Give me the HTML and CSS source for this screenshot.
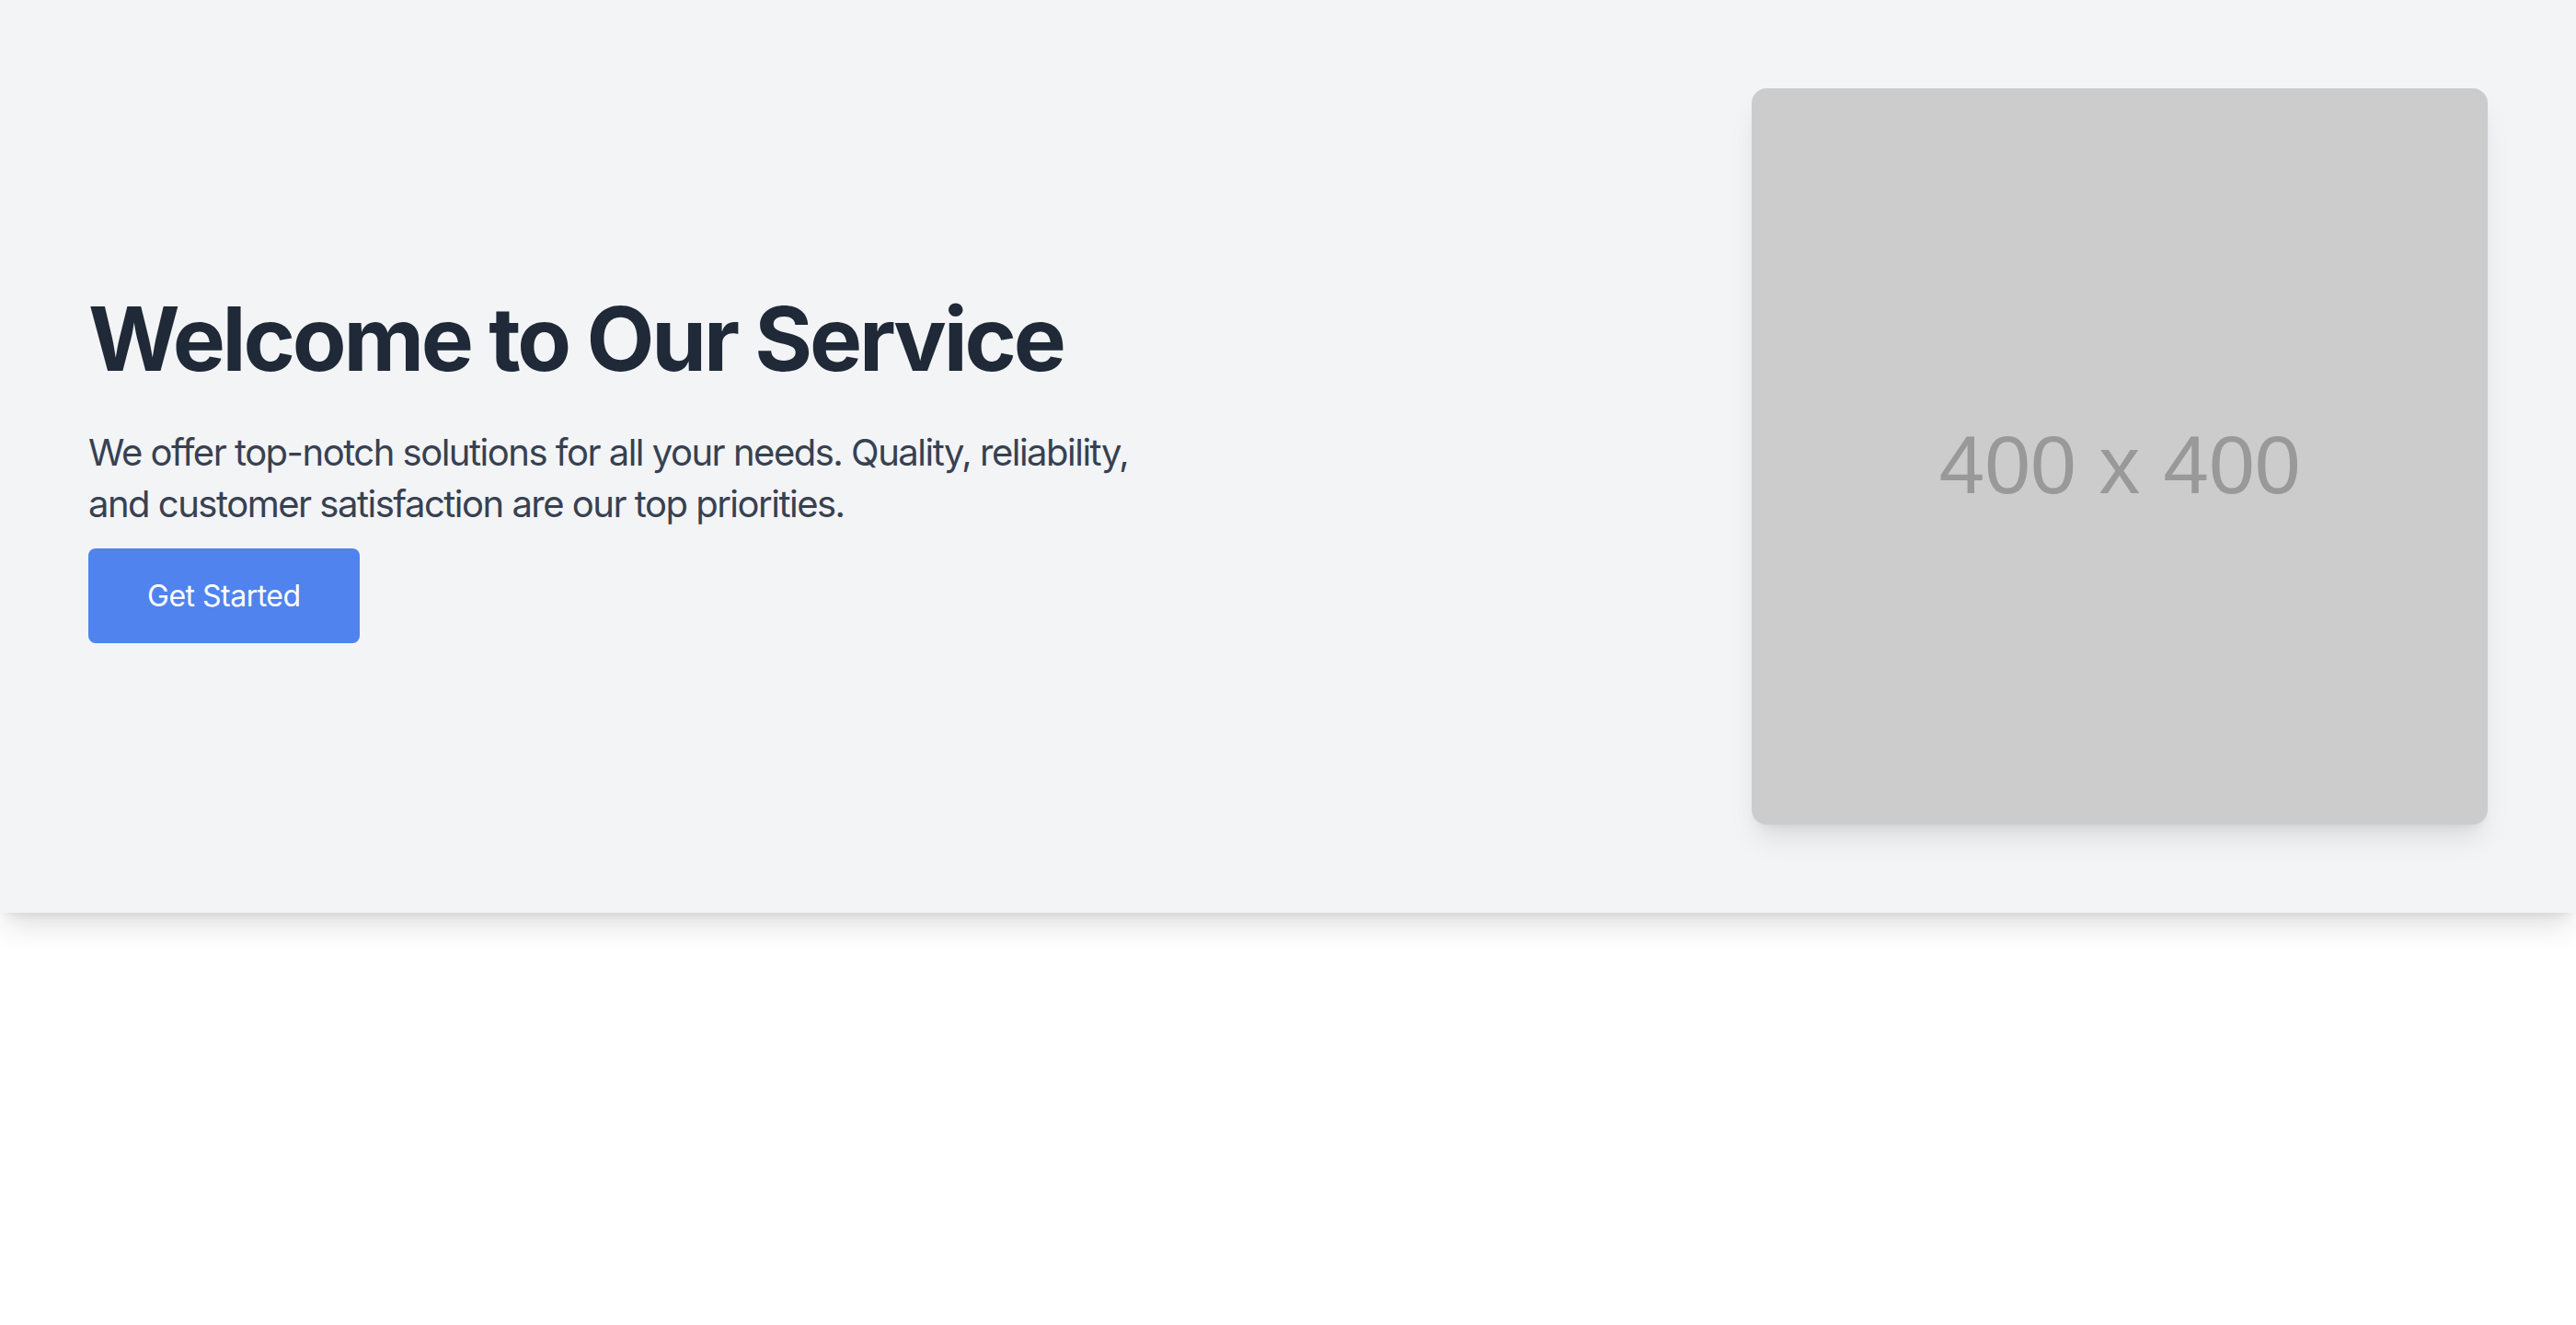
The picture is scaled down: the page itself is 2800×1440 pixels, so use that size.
FILE: index.html
```html
<!DOCTYPE html>
<html lang="en">
<head>
<meta charset="utf-8">
<title>Welcome</title>
<link rel="stylesheet" href="styles.css">
</head>
<body>
<section class="hero">
  <div class="hero-text">
    <h1 class="hero-title">Welcome to Our Service</h1>
    <p class="hero-lead">We offer top-notch solutions for all your needs. Quality, reliability, and customer satisfaction are our top priorities.</p>
    <div class="hero-actions"><a class="btn" href="#">Get Started</a></div>
  </div>
  <div class="hero-image"><span class="hero-image-label">400 x 400</span></div>
</section>
</body>
</html>
```

FILE: styles.css
```css
html, body {
  margin: 0;
  padding: 0;
  background: #ffffff;
}
body {
  min-height: 100vh;
  font-family: "Inter", "Liberation Sans", sans-serif;
}
.hero {
  position: relative;
  display: flex;
  align-items: center;
  justify-content: space-between;
  padding: 96px;
  background: #f3f4f6;
  box-shadow: 0 20px 30px -6px rgba(0,0,0,0.12), 0 8px 12px -8px rgba(0,0,0,0.12);
}
.hero-text {
  width: 1152px;
}
.hero-title {
  margin: 0 0 48px 0;
  font-size: 96px;
  line-height: 96px;
  font-weight: 700;
  letter-spacing: -3.2px;
  color: #1f2937;
}
.hero-lead {
  margin: 0 0 48px 0;
  font-size: 40px;
  line-height: 56px;
  letter-spacing: -1.5px;
  color: #374151;
}
.hero-actions {
  font-size: 32px;
  line-height: 48px;
}
.btn {
  display: inline;
  padding: 32px 64px;
  background: #5083ee;
  color: #ffffff;
  text-decoration: none;
  letter-spacing: -0.5px;
  border-radius: 8px;
}
.hero-image {
  width: 800px;
  height: 800px;
  flex: none;
  background: #cccccc;
  border-radius: 16px;
  box-shadow: 0 20px 30px -6px rgba(0,0,0,0.1), 0 8px 12px -8px rgba(0,0,0,0.1);
  display: flex;
  align-items: center;
  justify-content: center;
  padding-top: 18px;
  box-sizing: border-box;
}
.hero-image-label {
  font-family: "Liberation Sans", Arial, sans-serif;
  font-size: 89.5px;
  color: #999999;
}
```
